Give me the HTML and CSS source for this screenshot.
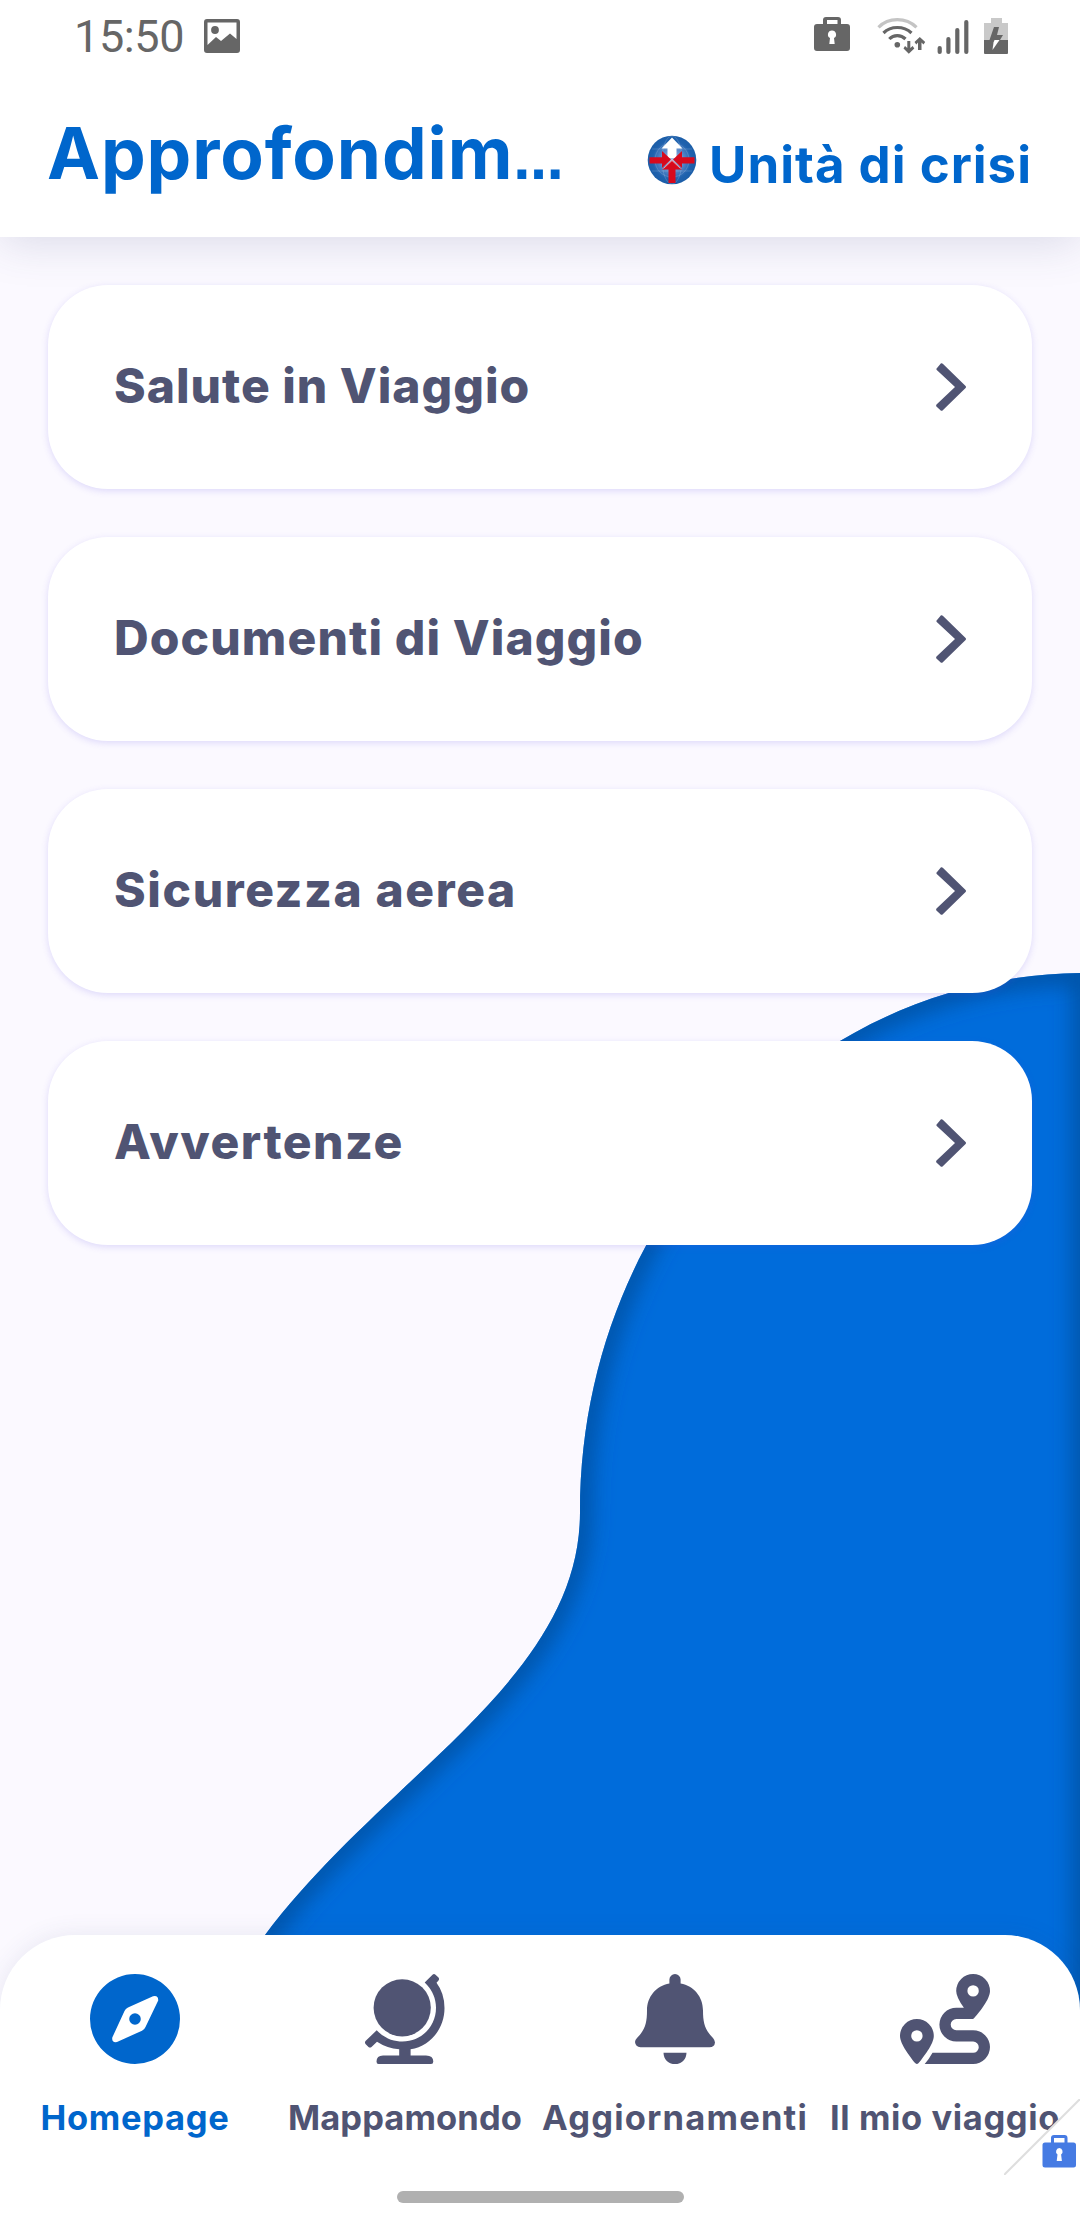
FILE: index.html
```html
<!DOCTYPE html>
<html lang="it">
<head>
    <meta charset="UTF-8">
    <meta name="viewport" content="width=device-width, initial-scale=1.0">
    <title>Approfondimenti</title>
    <link rel="stylesheet" href="styles.css">
</head>
<body>
    <div class="screen">
        <!-- Blue wave behind the content -->
        <svg class="wave" viewBox="0 0 1080 2220" width="1080" height="2220">
            <defs>
                <clipPath id="waveClip">
                    <path d="M1086 973C807 973 580 1214 580 1512C580 1680 385 1775 265 1935V2100H1086Z"/>
                </clipPath>
                <filter id="soft" filterUnits="userSpaceOnUse" x="150" y="900" width="1000" height="1300">
                    <feGaussianBlur stdDeviation="11"/>
                </filter>
            </defs>
            <g clip-path="url(#waveClip)">
                <rect x="200" y="950" width="880" height="1200" fill="#006cdb"/>
                <path d="M1084 973C807 973 580 1214 580 1512C580 1680 385 1775 265 1935L220 2000M1084 965V2100" fill="none" stroke="#00509f" stroke-width="20" filter="url(#soft)"/>
            </g>
        </svg>

        <header class="header">
            <div class="status">
                <span class="clock">15:50</span>
                <svg class="status-picture" width="36" height="34" viewBox="0 0 36 34">
                    <path fill-rule="evenodd" d="M3 0H33Q36 0 36 3V31Q36 34 33 34H3Q0 34 0 31V3Q0 0 3 0ZM3.500 3.500V26L12 18L17 22L26 14.500L32.500 20V3.500Z"/>
                    <circle cx="11" cy="11" r="3.900"/>
                </svg>
                <svg class="status-right" width="196" height="38" viewBox="812 17 196 38">
                    <path fill-rule="evenodd" d="M816 24H822V20Q822 17 825 17H837Q840 17 840 20V24H846Q849 24 849 27V48Q849 51 846 51H816Q813 51 813 48V27Q813 24 816 24ZM826 20V24H836.500V20ZM831 30.500A4 4 0 0 0 829 38L828.300 44H833.700L833 38A4 4 0 0 0 831 30.500Z"/>
                    <g fill="none" stroke="#666" stroke-width="3.200">
                        <path stroke="#c4c4c4" d="M877.500 27.300Q885 19.600 896.300 19.600T915.500 27.300"/>
                        <path d="M882.500 33Q888 27.500 896.300 27.500T910.500 33"/>
                        <path d="M888.300 39Q891.500 35.600 896.300 35.600T904.500 39"/>
                    </g>
                    <circle cx="896.300" cy="44.700" r="2.800"/>
                    <path d="M906.300 41H909.300V48L911.700 46L913.300 48.500L907.800 53.800L902.500 48.500L904 46L906.300 48ZM917 50H920.500V42.500L922.500 44.500L924.200 42L918.800 37L913.500 42L915.300 44.500L917 42.500Z"/>
                    <path d="M938.700 48V52M947.400 39V52M956.300 30V52M965.300 22V52" stroke="#666" stroke-width="4.200" stroke-linecap="round"/>
                    <path d="M990 18H1001V23H1007V40H983V23H990Z" fill="#c9c9c9"/>
                    <path d="M983 40H1007V53Q1007 54 1006 54H984Q983 54 983 53Z"/>
                    <path d="M993 27H998L996 35H1002L999 40H988.500Z"/>
                    <path d="M993.500 40H998.500L991.500 50L992.500 42.500Z" fill="#fff"/>
                </svg>
            </div>
            <div class="titlebar">
                <h1 class="title">Approfondim<span class="dots">…</span></h1>
                <div class="unit">
                    <svg class="unit-logo" width="50" height="50" viewBox="0 0 50 50">
                        <defs>
                            <radialGradient id="ball">
                                <stop offset="0" stop-color="#b9c9ec"/>
                                <stop offset=".45" stop-color="#5d8bcb"/>
                                <stop offset=".8" stop-color="#1f62ae"/>
                                <stop offset="1" stop-color="#1c5ea8"/>
                            </radialGradient>
                        </defs>
                        <circle cx="25" cy="25" r="24.300" fill="url(#ball)"/>
                        <g fill="none" stroke="#fff" stroke-opacity=".16">
                            <circle cx="25" cy="25" r="17"/>
                            <ellipse cx="25" cy="25" rx="10" ry="24"/>
                            <path d="M5 14H45M5 36H45"/>
                        </g>
                        <path d="M25 2.500L35.500 13.500H29.500V23H20.500V13.500H14.500Z" fill="#fff"/>
                        <path d="M2.500 22.300H15V16L24 24.500L15 33V28.500H2.500ZM47.500 22.300H35V16L26 24.500L35 33V28.500H47.500ZM25 25.500L35 34.500H28.500V48H21.500V34.500H15Z" fill="#d70a1d"/>
                        <path d="M16.500 33.500L25 25.500L33.500 33.500" fill="none" stroke="#ee9aa5" stroke-width="1"/>
                    </svg>
                    <span>Unità di crisi</span>
                </div>
            </div>
        </header>

        <main class="list">
            <a class="card">
                <span class="card-salute">Salute in Viaggio</span>
                <svg class="chevron" viewBox="0 0 30 48"><path d="M.400 5.700L5 .300Q6 0 6.800.800L29.600 23Q30.400 24 29.600 25L6.800 47.200Q6 48 5 47.700L.400 43.500Q-.200 42.500.500 41.500L19 24L.500 6.800Z"/></svg>
            </a>
            <a class="card">
                <span class="card-documenti">Documenti di Viaggio</span>
                <svg class="chevron" viewBox="0 0 30 48"><path d="M.400 5.700L5 .300Q6 0 6.800.800L29.600 23Q30.400 24 29.600 25L6.800 47.200Q6 48 5 47.700L.400 43.500Q-.200 42.500.500 41.500L19 24L.500 6.800Z"/></svg>
            </a>
            <a class="card">
                <span class="card-sicurezza">Sicurezza aerea</span>
                <svg class="chevron" viewBox="0 0 30 48"><path d="M.400 5.700L5 .300Q6 0 6.800.800L29.600 23Q30.400 24 29.600 25L6.800 47.200Q6 48 5 47.700L.400 43.500Q-.200 42.500.500 41.500L19 24L.500 6.800Z"/></svg>
            </a>
            <a class="card">
                <span class="card-avvertenze">Avvertenze</span>
                <svg class="chevron" viewBox="0 0 30 48"><path d="M.400 5.700L5 .300Q6 0 6.800.800L29.600 23Q30.400 24 29.600 25L6.800 47.200Q6 48 5 47.700L.400 43.500Q-.200 42.500.500 41.500L19 24L.500 6.800Z"/></svg>
            </a>
        </main>

        <nav class="navbar">
            <div class="tabs">
                <a class="tab active">
                    <svg class="tab-icon" viewBox="0 0 90 90">
                        <path fill-rule="evenodd" d="M45 0A45 45 0 1 1 45 90A45 45 0 1 1 45 0ZM63 22.200L38 33.500Q35.500 34.500 34.500 37L22.300 63.500Q21.500 69 27 68L52 56.700Q54.500 55.500 55.500 53L68.200 26.500Q68.500 21 63 22.200ZM45 39.200A5.800 5.800 0 1 1 45 50.800A5.800 5.800 0 1 1 45 39.200Z"/>
                    </svg>
                    <span class="tab-home">Homepage</span>
                </a>
                <a class="tab">
                    <svg class="tab-icon" viewBox="0 0 90 90">
                        <circle cx="42.200" cy="33.800" r="28.600"/>
                        <path d="M64.700 8.500L72.500.700Q74 -.500 75.500.700L78.500 3.500Q79.600 5 78.500 6.500L76.500 8.800Q84.500 19.500 84.500 34C84.500 55 70 72.500 50.600 75.200V81.500H66Q73.300 81.500 73.300 87.500Q73.300 90 71 90H18.500Q16.500 90 16.500 87.500Q16.500 81.500 23 81.500H39.200V75.200Q27 74.300 17 67.700L11.500 73Q10 74 8.500 73L5.500 70Q4.500 68.500 5.500 67L16.700 56.300L19 58.500C27 65.500 35 67.500 42.500 67.500C61.500 67.500 76 52.500 76 33.800C76 24 72 16.500 67.500 11.400Z"/>
                    </svg>
                    <span class="tab-map">Mappamondo</span>
                </a>
                <a class="tab">
                    <svg class="tab-icon" viewBox="0 0 90 90">
                        <path d="M39.400 9.600V5.600A5.600 5.600 0 0 1 50.600 5.600V9.600C64 12 73 23 73 36.500C73 49 75 56 83 64Q85 66.500 85 68.500Q84.500 73.200 79.500 73.200H10.500Q5.500 73 5 68Q5 66 7 64C15 56 17 49 17 36.500C17 23 26 12 39.400 9.600ZM33.500 78.800H56.500C56 94 34 94 33.500 78.800Z"/>
                    </svg>
                    <span class="tab-news">Aggiornamenti</span>
                </a>
                <a class="tab">
                    <svg class="tab-icon" viewBox="0 0 90 90">
                        <path fill-rule="evenodd" d="M73.100 0A16.900 16.900 0 0 1 90 16.900C90 25 79 39 73.100 45H56.300A5.600 5.600 0 0 0 56.300 56.200H73.100A16.900 16.900 0 0 1 73.100 90H24.700Q28.500 86 32.500 78.800H73.100A5.600 5.600 0 0 0 73.100 67.500H56.300A16.900 16.900 0 0 1 56.300 33.700H63.900Q56.200 23 56.200 16.900A16.900 16.900 0 0 1 73.100 0ZM73.100 11.200A5.700 5.700 0 1 0 73.100 22.600A5.700 5.700 0 1 0 73.100 11.200ZM16.900 45A16.900 16.900 0 0 1 33.800 61.900C33.800 70 23 83.500 18.400 89.300Q16.900 90.700 15.400 89.300C10.800 83.500 0 70 0 61.900A16.900 16.900 0 0 1 16.900 45ZM16.900 56.200A5.700 5.700 0 1 0 16.900 67.600A5.700 5.700 0 1 0 16.900 56.200Z"/>
                    </svg>
                    <span class="tab-trip">Il mio viaggio</span>
                </a>
            </div>
            <div class="home-indicator"></div>
            <!-- Work profile badge -->
            <svg class="badge" width="76" height="76" viewBox="0 0 76 76">
                <path d="M76 0V76H0Z" fill="#fff"/>
                <path d="M76 0L0 76" stroke="#dedede" stroke-width="2"/>
                <path fill="#467be3" fill-rule="evenodd" d="M41 43.500H47V39Q47 36 50 36H60.500Q63.500 36 63.500 39V43.500H69.500Q72 43.500 72 46V66Q72 68.500 69.500 68.500H41Q38.500 68.500 38.500 66V46Q38.500 43.500 41 43.500ZM50 39V43.500H60.500V39ZM55.300 49A3.600 3.600 0 0 0 53.500 55.500L52.700 62H57.900L57.100 55.500A3.600 3.600 0 0 0 55.300 49Z"/>
            </svg>
        </nav>
    </div>
</body>
</html>
```

FILE: styles.css
```css
* {
    box-sizing: border-box;
}

body {
    margin: 0;
    font-family: Inter, "Noto Sans", sans-serif;
    background-color: #fbf9ff;
}

svg {
    display: block;
    flex-shrink: 0;
}

.screen {
    position: relative;
    display: flex;
    flex-direction: column;
    width: 1080px;
    height: 2220px;
    overflow: hidden;
}

.wave {
    position: absolute;
    top: 0;
    left: 0;
}

.header {
    position: relative;
    height: 237px;
    background: #fff;
    box-shadow: 0 6px 42px rgba(60, 70, 120, 0.17);
}

.status {
    display: flex;
    align-items: flex-start;
    height: 72px;
    padding: 0 71px 0 74px;
    fill: #666;
}

.clock {
    width: 130px;
    padding-top: 11px;
    font-family: Roboto, sans-serif;
    font-size: 45px;
    line-height: 52px;
    color: #666;
    letter-spacing: -0.4px;
}

.status-picture {
    margin-top: 19px;
}

.status-right {
    margin-top: 17px;
    margin-left: auto;
}

.titlebar {
    display: flex;
    justify-content: space-between;
    padding: 0 48px 0 47px;
    color: #0066cc;
}

.title {
    margin: 36px 0 0;
    font-size: 71px;
    font-weight: 700;
    line-height: 90px;
    letter-spacing: 0.9px;
    white-space: nowrap;
}

.dots {
    font-family: "DejaVu Sans", sans-serif;
    font-size: 50px;
    letter-spacing: 0;
    line-height: 1;
}

.unit {
    display: flex;
    align-items: flex-start;
    font-size: 51px;
    font-weight: 700;
    line-height: 60px;
    white-space: nowrap;
    padding-top: 63px;
}

.unit span {
    letter-spacing: 1px;
}

.unit-logo {
    margin-right: 12px;
}

.list {
    position: relative;
    display: flex;
    flex-direction: column;
    gap: 48px;
    padding: 48px;
}

.card {
    display: flex;
    align-items: center;
    justify-content: space-between;
    height: 204px;
    padding: 0 66px;
    border-radius: 60px;
    background: #fff;
    box-shadow: 0 2px 7px rgba(90, 70, 230, 0.18);
    color: #505473;
    font-size: 48px;
    font-weight: 800;
    line-height: 60px;
}

.card span {
    margin-top: -3px;
}

.card-salute {
    letter-spacing: 1px;
}

.card-documenti {
    letter-spacing: 1.1px;
}

.card-sicurezza {
    letter-spacing: 1.6px;
}

.card-avvertenze {
    letter-spacing: 1.5px;
}

.chevron {
    width: 30px;
    height: 48px;
    fill: #505473;
}

.navbar {
    position: relative;
    height: 285px;
    margin-top: auto;
    padding-top: 39px;
    border-radius: 75px 75px 0 0;
    background: #fff;
    box-shadow: 0 0 24px rgba(60, 70, 120, 0.1);
}

.tabs {
    display: flex;
}

.tab {
    display: flex;
    flex: 1 1 0;
    flex-direction: column;
    align-items: center;
    min-width: 0;
    color: #505473;
    fill: #505473;
    font-size: 34.5px;
    font-weight: 700;
    line-height: 42px;
    white-space: nowrap;
}

.tab.active {
    color: #0066cc;
    fill: #0066cc;
}

.tab-home {
    letter-spacing: 0.7px;
}

.tab-map {
    letter-spacing: 0.1px;
}

.tab-news {
    letter-spacing: 1.2px;
}

.tab-trip {
    letter-spacing: 0.6px;
}

.tab-icon {
    width: 90px;
    height: 90px;
    margin-bottom: 33px;
}

.home-indicator {
    width: 287px;
    height: 12px;
    margin: 52px auto 0;
    border-radius: 6px;
    background: #b0b0b0;
}

.badge {
    position: absolute;
    top: 164px;
    right: 0;
}
```
